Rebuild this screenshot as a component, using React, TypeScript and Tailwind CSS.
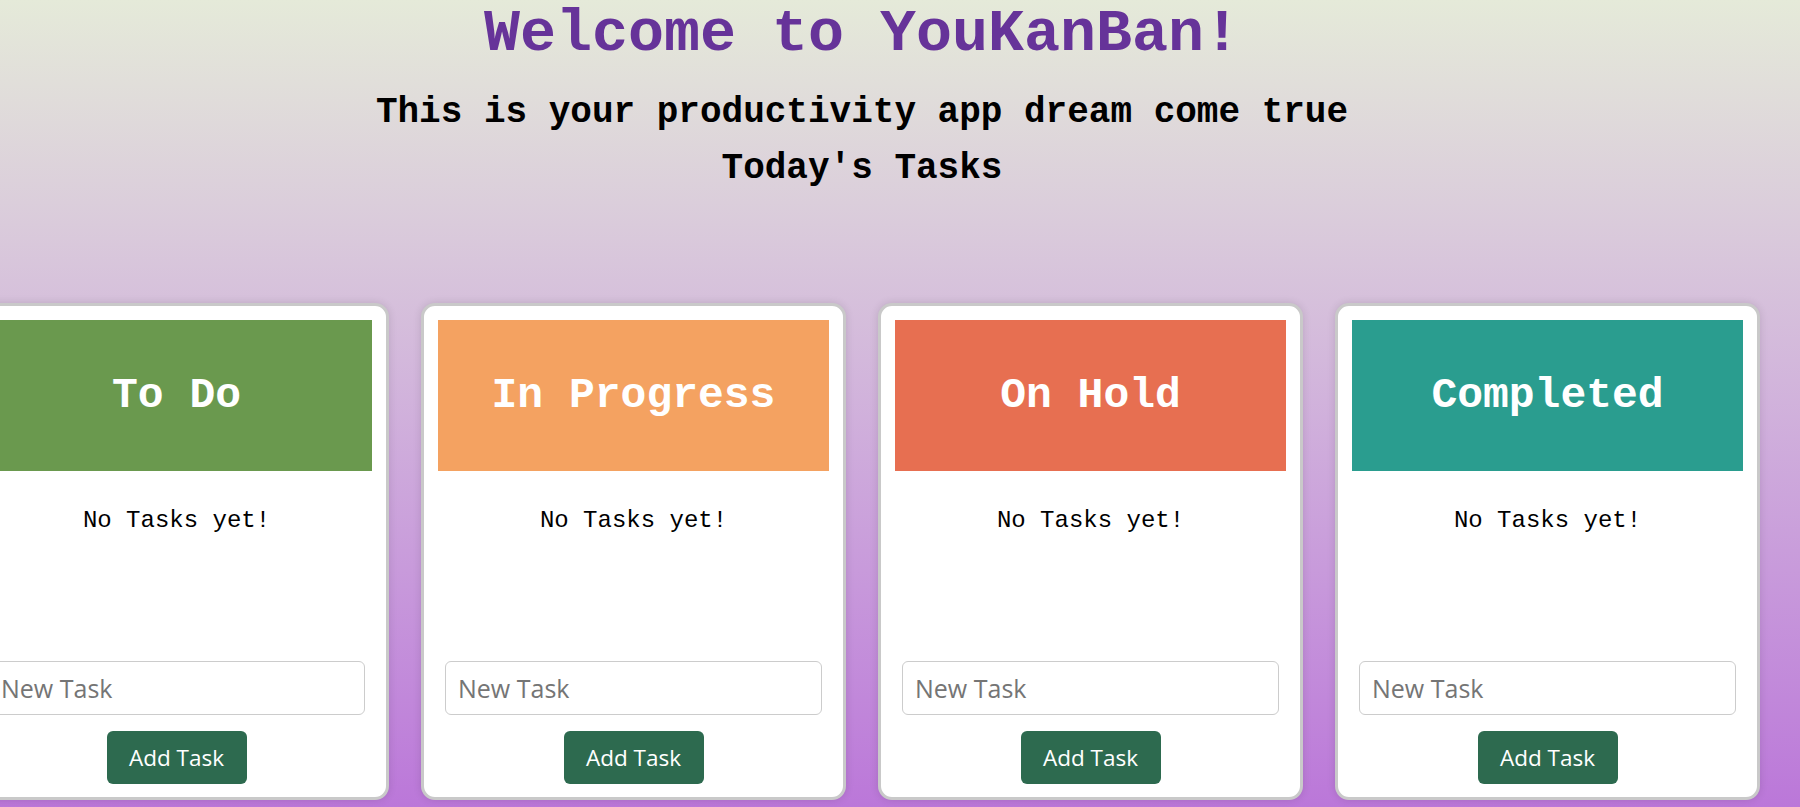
import React from "react";

const columns = [
  { title: "To Do", color: "bg-[#6a994e]" },
  { title: "In Progress", color: "bg-[#f4a261]" },
  { title: "On Hold", color: "bg-[#e76f51]" },
  { title: "Completed", color: "bg-[#2a9d8f]" },
];

function Column({ title, color }: { title: string; color: string }) {
  return (
    <div className="flex h-[497px] w-[425px] shrink-0 flex-col rounded-[14px] border-[3px] border-[#c9c9c9] bg-white px-[14px] pb-[13px] pt-[14px] shadow-[0_0_8px_rgba(0,0,0,0.12)]">
      <div className={`flex h-[151px] items-center justify-center pt-[2px] ${color}`}>
        <h2 className="font-['Liberation_Mono',monospace] text-[43px] font-bold text-white">{title}</h2>
      </div>
      <p className="mt-[32px] text-center font-['Liberation_Mono',monospace] text-[24px] text-black">No Tasks yet!</p>
      <div className="mt-auto flex flex-col items-center">
        <input
          type="text"
          placeholder="New Task"
          className="h-[54px] w-[377px] rounded-[6px] border border-[#cccccc] bg-white px-[12px] font-['Open_Sans',sans-serif] text-[25px] text-black outline-none placeholder:text-[#757575]"
        />
        <button className="mt-[16px] h-[53px] w-[140px] rounded-[6px] bg-[#2d6a4f] font-['Open_Sans',sans-serif] text-[22.5px] text-white">
          Add Task
        </button>
      </div>
    </div>
  );
}

export default function App() {
  return (
    <div className="min-h-screen w-full overflow-hidden bg-gradient-to-b from-[#e5ead9] to-[#bb77d9]">
      <div className="flex w-[1724px] flex-col items-center font-['Liberation_Mono',monospace]">
        <h1 className="text-[60px] font-bold leading-[68px] text-[#663399]">Welcome to YouKanBan!</h1>
        <h2 className="mt-[17px] text-[36px] font-bold leading-[56px] text-black">This is your productivity app dream come true</h2>
        <h3 className="text-[36px] font-bold leading-[56px] text-black">Today's Tasks</h3>
        <div className="mt-[106px] flex w-full justify-center gap-[32px]">
          {columns.map((c) => (
            <Column key={c.title} title={c.title} color={c.color} />
          ))}
        </div>
      </div>
    </div>
  );
}
